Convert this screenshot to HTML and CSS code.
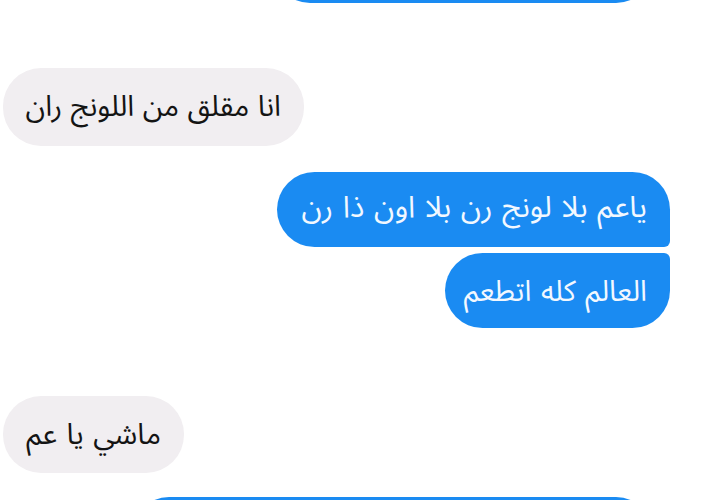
FILE: index.html
```html
<!DOCTYPE html>
<html lang="ar">
<head>
  <meta charset="UTF-8">
  <title>محادثة</title>
  <link rel="stylesheet" href="styles.css">
</head>
<body>
  <div class="chat">
    <div class="msg sent sent-edge sent-top"></div>

    <div class="msg received first">انا مقلق من اللونج ران</div>

    <div class="msg sent sent-first">ياعم بلا لونج رن بلا اون ذا رن</div>
    <div class="msg sent sent-last">العالم كله اتطعم</div>

    <div class="msg received second">ماشي يا عم</div>

    <div class="msg sent sent-edge sent-bottom"></div>
  </div>
</body>
</html>
```

FILE: styles.css
```css
body {
  margin: 0;
  background: #ffffff;
  overflow: hidden;
  font-family: "Noto Sans Arabic", "DejaVu Sans", sans-serif;
}
.chat {
  display: flex;
  flex-direction: column;
  height: 500px;
  overflow: hidden;
}
.msg {
  direction: rtl;
  font-size: 29px;
  line-height: 36px;
  word-spacing: 2px;
  padding: 21px 23px;
  border-radius: 38px;
  white-space: nowrap;
  box-sizing: border-box;
  height: 76px;
}
.received {
  align-self: flex-start;
  background: #f1eef1;
  color: #141414;
  margin-left: 3px;
}
.sent {
  align-self: flex-end;
  background: #1a8bf2;
  color: #f2f8ff;
  margin-right: 49px;
}
.sent-edge {
  margin-right: 65px;
  width: 382px;
  flex-shrink: 0;
}
.sent-top {
  margin-top: -73px;
}
.received.first {
  margin-top: 65px;
  width: 301px;
  height: 78px;
  word-spacing: 1px;
}
.sent-first {
  margin-top: 26px;
  width: 393px;
  border-radius: 38px 38px 6px 38px;
  height: 75px;
  padding-top: 18px;
  font-size: 30px;
}
.sent-last {
  margin-top: 6px;
  width: 225px;
  border-radius: 38px 6px 38px 38px;
  height: 75px;
}
.received.second {
  margin-top: 68px;
  width: 181px;
  height: 77px;
}
.sent-bottom {
  margin-top: 24px;
  width: 523px;
}
```
